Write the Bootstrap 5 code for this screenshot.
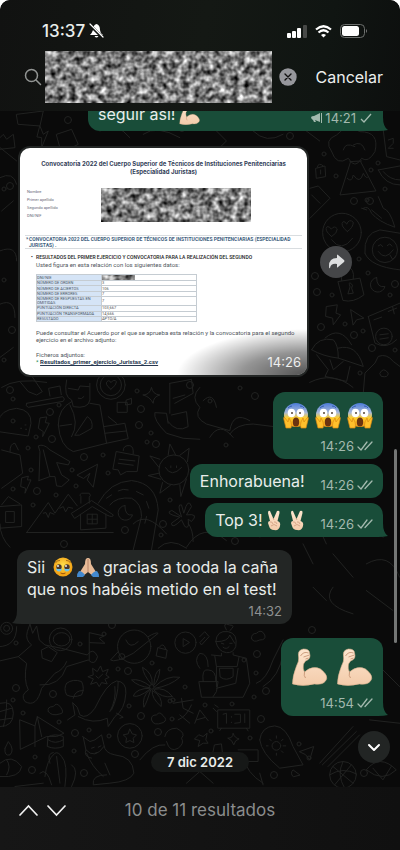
<!DOCTYPE html>
<html lang="es">
<head>
<meta charset="utf-8">
<meta name="viewport" content="width=device-width, initial-scale=1">
<title>Chat</title>
<link href="https://cdn.jsdelivr.net/npm/bootstrap@5.3.0/dist/css/bootstrap.min.css" rel="stylesheet">
<style>
html{background:#fff}
body{background:#0a0a0a;color:#e9edeb;font-family:Inter,"Liberation Sans",sans-serif;font-size:16px;line-height:22px;border-radius:10px 10px 0 0;overflow:hidden}
svg{display:block;flex:none}
.topbar{background:linear-gradient(100deg,#111211,#141814 50%,#101512 80%,#0d0f0e);border-radius:10px 10px 0 0;padding-bottom:5px}
.status{padding:14px 32px 0 42px;height:48px}
.clock{font-size:17px;font-weight:500}
.searchrow{height:58px;padding:0 17px 0 24px;gap:3px}
.search-in{width:100%;height:38px;background:transparent;border:0;color:#ddd;outline:0}
.field{height:52px}
.censor{position:absolute;inset:0;width:100%;height:100%}
.plain{border:0;background:transparent;color:inherit;padding:0}
.cancel{margin-left:16px;color:#eceeed}
.chat{overflow:hidden;min-height:0;padding:0 17px;z-index:0}
.chat>*{flex-shrink:0}
.wall{position:absolute;inset:0;width:100%;height:100%;z-index:-1;fill:none;stroke:#212221;stroke-width:3;stroke-linejoin:round;stroke-linecap:round}
.bub{position:relative;border-radius:12px;padding:6px 10px;background:#232625}
.out{background:#194d39;align-self:flex-end}
.in{align-self:flex-start}
.tail::after{content:"";position:absolute;right:-5px;bottom:0;width:18px;height:14px;background:inherit;clip-path:path("M0 14 H8 Q14 14 18 13 Q13 10 13 0 H0Z")}
.in.tail::after{right:auto;left:-5px;transform:scaleX(-1)}
.first{width:295px}
.meta{font-size:13px;line-height:14px;color:#a3b9ae;display:flex;align-items:center;gap:3px}
.in .meta{color:#8f9191}
.g5{margin-top:5px}.g13{margin-top:13px}.g14{margin-top:14px}.g15{margin-top:15px}
.gap6{gap:6px}
.tall{height:67px}.taller{height:78px}
.wide{width:275px}
.shot{padding:2px;width:291px;margin-left:1px}
.doc{position:relative;background:#fff;border-radius:10px;overflow:hidden;height:227px;padding:12px 5px 0 5px;color:#50565d;font-family:Roboto,sans-serif;font-size:6px;line-height:7px}
.doc h1{font-family:Inter,sans-serif;font-size:6px;line-height:8px;font-weight:700;color:#34425a;margin:0;text-align:center}
.who{font-size:4px;line-height:8px;padding:12px 0 0 2px;height:59px;color:#667}
.who svg{margin-left:43px;width:150px;height:34px}
.sect{border-top:1px solid #d9dde0;border-bottom:1px solid #d9dde0;color:#3f5f80;font-size:5px;line-height:6px;font-weight:700;padding:0 0 0 4px;height:14px;position:relative}
.sect::before{content:"*";position:absolute;left:1px}
.inner{padding:4px 5px 0 11px}
.strongline{font-size:5px;line-height:8px;font-weight:500;color:#1b1b1b;position:relative}
.strongline::before{content:"•";position:absolute;left:-5px}
.data{width:161px;height:48px;margin:6px 0 7px;font-size:4px;line-height:4px;border-collapse:collapse;color:#555}
.data th,.data td{border:1px solid #c5ccd2;padding:0;font-weight:400}
.data th{background:#d5e4f6;width:65px;color:#4a5563}
.doc a{color:#26374f;font-weight:700}
.shade{position:absolute;inset:0;background:radial-gradient(ellipse 130px 46px at 100% 100%,rgba(0,0,0,.68),rgba(0,0,0,.42) 50%,transparent)}
.stamp{position:absolute;right:6px;bottom:5px;color:#eee;font-size:13px;line-height:16px;font-family:Inter,sans-serif}
.round{width:32px;height:32px;border-radius:50%;border:0;padding:0;display:flex;align-items:center;justify-content:center}
.share{background:#454648;margin-left:11px}
.fab{position:absolute;right:10px;bottom:24px;background:#222524}
.thumb{position:absolute;right:3px;top:338px;width:3px;height:194px;border-radius:2px;background:#747675}
.pill{background:#161817;border-radius:10px;font-size:13px;line-height:20px;font-weight:600;padding:0 16px;margin:36px 0 15px}
.bottombar{background:linear-gradient(90deg,#161616,#101010);height:63px;padding:12px 19px 0;gap:9px;color:#8b8d8d}
.bottombar button{height:22px;display:flex;align-items:center}
.count{font-size:17px;padding-right:56px}
</style>
<script src="https://cdn.jsdelivr.net/npm/bootstrap@5.3.0/dist/js/bootstrap.bundle.min.js"></script>
</head>
<body class="d-flex flex-column vh-100">
<svg width="0" height="0" class="position-absolute" aria-hidden="true">
<defs>
<filter id="grain" x="0" y="0" width="100%" height="100%" color-interpolation-filters="sRGB"><feTurbulence type="fractalNoise" baseFrequency=".16" numOctaves="2" seed="8"/><feColorMatrix values="1.4 0 0 0 -.2 1.4 0 0 0 -.2 1.4 0 0 0 -.2 0 0 0 0 1"/></filter>
<linearGradient id="gs" x2="0" y2="1"><stop stop-color="#4b7bd8"/><stop offset=".4" stop-color="#a9b9d8"/><stop offset=".62" stop-color="#ffd02e"/><stop offset="1" stop-color="#f59a16"/></linearGradient>
<radialGradient id="gy" cy=".4"><stop stop-color="#ffe14d"/><stop offset="1" stop-color="#f4a416"/></radialGradient>
<linearGradient id="sk" x2="0" y2="1"><stop stop-color="#fde6cf"/><stop offset="1" stop-color="#f3cbaa"/></linearGradient>
<symbol id="scream" viewBox="0 0 26 27"><circle cx="13" cy="13" r="12" fill="url(#gs)"/><path d="M5 6q2-2 4-2M17 4q3 0 4 2" stroke="#3560b5" fill="none"/><ellipse cx="8.500" cy="11" rx="3.800" ry="4.300" fill="#fff"/><ellipse cx="17.500" cy="11" rx="3.800" ry="4.300" fill="#fff"/><circle cx="9" cy="11" r="1" fill="#543"/><circle cx="17" cy="11" r="1" fill="#543"/><ellipse cx="13" cy="20" rx="3.200" ry="4.500" fill="#6b3310"/><path d="M2 16Q0 14 1 18L3 26H8Q9 23 8 20L6 16L5 20ZM24 16Q26 14 25 18L23 26H18Q17 23 18 20L20 16L21 20Z" fill="#ffc02c" stroke="#dc8b12" stroke-width=".7"/></symbol>
<symbol id="arm" viewBox="0 0 36 38"><path d="M1 36Q1 28 5 18Q8 13 7 8Q6 2 12 1Q18 1 18 5Q20 11 14 13L12 16Q11 21 13 24Q21 17 29 21Q38 28 34 33Q31 37 23 36Q11 39 1 36Z" fill="url(#sk)" stroke="#dcb18f" stroke-width=".6"/><path d="M9 8Q12 3 17 5M12 9L18 7M14 11l3-1M13 24Q12 28 14 30" fill="none" stroke="#c08d6c" stroke-width=".8"/></symbol>
<symbol id="peace" viewBox="0 0 15 21"><path d="M3 11L1 3Q1 0 3 1L6.500 9L10 1Q13 0 12.500 3L10.500 11Q14 12 13 16Q12 21 7 20Q3 20 2 16L1 13Q1 11 3 11Z" fill="url(#sk)"/><path d="M7 10L6 8M3 12q2-1 3 2M7 12q2-1 3 2M4 16q3-3 6 0" fill="none" stroke="#c99474" stroke-width=".7"/></symbol>
<symbol id="tears" viewBox="0 0 20 20"><circle cx="10" cy="10" r="9.500" fill="url(#gy)"/><path d="M2.500 6Q4 3 7 3.500M13 3.500Q16 3 17.500 6" fill="none" stroke="#9b6014" stroke-width=".8"/><circle cx="6" cy="10" r="2.700" fill="#4b382c"/><circle cx="14" cy="10" r="2.700" fill="#4b382c"/><path d="M3 11.500Q6 12.500 9 11.500Q8.500 14.500 6 14.500Q3.500 14.500 3 11.500M11 11.500Q14 12.500 17 11.500Q16.500 14.500 14 14.500Q11.500 14.500 11 11.500" fill="#68c4ed"/><circle cx="5" cy="9" r=".9" fill="#fff"/><circle cx="13" cy="9" r=".9" fill="#fff"/><path d="M7.500 16Q10 17.500 12.500 16" fill="none" stroke="#98540f"/></symbol>
<symbol id="pray" viewBox="0 0 22 21"><path d="M10.500 1Q8 1 8 7L3 15L6 19L11 15L16 19L19 15L14 7Q14 1 11.500 1Z" fill="#e8bb97"/><path d="M11 2V15" stroke="#a8755a" stroke-width=".8"/><path d="M2 14Q5 14 8 18L6 20H0Q0 16 2 14M20 14Q17 14 14 18L16 20H22Q22 16 20 14" fill="#4389cf"/></symbol>
<symbol id="tick" viewBox="0 0 16 10"><path d="M1 6L4 9L10 1M8 8.500L15 1" fill="none" stroke="currentColor" stroke-width="1.300" stroke-linecap="round"/></symbol>
</defs>
</svg>

<header class="topbar flex-shrink-0">
 <div class="status d-flex align-items-center justify-content-between">
  <div class="d-flex align-items-center gap-1"><span class="clock">13:37</span>
   <svg width="15" height="16" viewBox="0 0 15 16"><path d="M7.500 1Q4 2 4 7Q3 10 1 12H14Q11 10 11 7Q11 2 7.500 1M5.500 13Q7.500 16 9.500 13Z" fill="#fff"/><path d="M0 1L14 15" stroke="#121412" stroke-width="3"/><path d="M1 1L14 14" stroke="#fff" stroke-width="1.200" stroke-linecap="round"/></svg></div>
  <div class="d-flex align-items-center gap-2">
   <svg width="20" height="13" viewBox="0 0 20 13" fill="#fff"><rect y="8" width="4" height="5" rx="1"/><rect x="5" y="6" width="4" height="7" rx="1"/><rect x="10" y="3" width="4" height="10" rx="1"/><rect x="16" width="4" height="13" rx="1" fill="#474947"/></svg>
   <svg width="17" height="13" viewBox="0 0 17 13" fill="none" stroke="#fff" stroke-width="2.200"><path d="M1 4.500Q8.500-2 16 4.500M3.500 7.500Q8.500 3 13.500 7.500"/><path d="M6 10Q8.500 8 11 10L8.500 12.500Z" fill="#fff" stroke="none"/></svg>
   <svg width="28" height="14" viewBox="0 0 28 14"><rect x=".5" y=".5" width="24" height="13" rx="4" fill="none" stroke="#6d706e"/><rect x="2" y="2" width="17" height="10" rx="2.500" fill="#fff"/><path d="M26 5Q28 7 26 9Z" fill="#777"/></svg>
  </div>
 </div>
 <div class="searchrow d-flex align-items-center">
  <svg width="18" height="18" viewBox="0 0 18 18" fill="none" stroke="#929593" stroke-width="1.500" stroke-linecap="round"><circle cx="7.500" cy="7.500" r="6"/><path d="M12 12L16.500 16.500"/></svg>
  <div class="field position-relative flex-fill d-flex align-items-center">
   <input class="search-in" type="text" aria-label="Buscar">
   <svg class="censor" aria-hidden="true"><rect width="100%" height="100%" filter="url(#grain)"/></svg>
  </div>
  <button class="plain ms-1" aria-label="Borrar"><svg width="18" height="18" viewBox="0 0 18 18"><circle cx="9" cy="9" r="8.700" fill="#96979c"/><path d="M6 6L12 12M12 6L6 12" stroke="#111" stroke-width="1.400" stroke-linecap="round"/></svg></button>
  <button class="plain cancel">Cancelar</button>
 </div>
</header>

<main class="chat flex-fill position-relative d-flex flex-column justify-content-end">
 <svg class="wall" viewBox="0 111 400 676" preserveAspectRatio="xMidYMid slice" aria-hidden="true">
  <defs>
   <marker id="o3" markerUnits="userSpaceOnUse" markerWidth="10" markerHeight="10" refX="5" refY="5"><circle cx="5" cy="5" r="3.500" stroke-width="1"/></marker>
   <marker id="o2" markerUnits="userSpaceOnUse" markerWidth="8" markerHeight="8" refX="4" refY="4"><circle cx="4" cy="4" r="2" stroke-width="1"/></marker>
  </defs>
  <path stroke="none" marker-start="url(#o3)" marker-mid="url(#o3)" marker-end="url(#o3)" d="M68 120L120 124 182 128 290 136 354 201 315 276 317 292 321 327 370 201 395 284 354 335 372 348 10 390 50 412 52 439 141 409 139 425 156 444 84 457 37 491 125 530 163 524 64 544 312 630 112 625 16 688 53 694 128 671 257 654 266 691 141 716 158 732 75 733 135 754 32 770 84 773 261 719 274 775 364 773 12 330 10 186 190 385 255 396 235 541"/>
  <path stroke="none" marker-start="url(#o2)" marker-mid="url(#o2)" marker-end="url(#o2)" d="M324 154L336 176 371 170 378 163 385 189 367 200 359 259 368 273 390 295 332 295 345 324 363 331 395 350 360 373 36 437 59 405 13 399 13 421 28 448 31 470 13 489 72 470 103 455 108 473 76 486 33 505 56 495 151 433 147 442 137 391 170 500 161 535 16 643 80 644 104 634 118 669 152 663 170 669 185 687 170 701 129 706 172 719 173 700 13 700 23 713 59 722 89 730 109 736 35 757 74 751 244 660 256 673 205 705 232 704 254 697 211 731 250 738 299 744 309 758 4 189 4 280 4 360 240 388 226 445 210 401"/>
  <g transform="translate(0 380) scale(.333)">
   <path d="M80 70L188 50Q198 57 190 64L85 82Q74 78 80 70M150 48L146 25L180 18L184 44M60 5L85 35L110 45L127 35L90-20M-5 125Q0 90 50 85Q95 90 93 130L85 168L-5 155M62 145h3M75 135h3M77 148h3"/>
   <path d="M120 115L115 145L130 155L128 170L148 130L136 128L140 112ZM65 295L62 320L77 325L75 340L93 300L82 300L85 290Z"/>
   <path d="M200 0Q190 50 215 60L220 80Q265 88 270 60L270 10M205 25L235 30L240 18L268 20M235 55Q245 60 252 50M175 135Q175 85 215 65M175 135Q180 200 220 215L320 190L300 75L270 70M210 75Q240 130 215 170M180 138L215 133M320 190L385 176L375 130L312 140M350 130L325 110M315 160L380 153M225 165L262 110Q280 120 276 145L240 165Z"/>
   <circle cx="333" cy="15" r="43"/><circle cx="333" cy="15" r="32"/><path d="M333 28Q310 10 325 2Q333 3 333 8Q342-4 350 5Q350 15 333 28M430 45Q450 45 455 22Q458 43 480 45Q460 50 460 70Q450 50 430 45M353 67H382V97H353ZM380 60L395 55V72L378 75ZM510 10L575-2L580 40L525 70M510 10V100M520 55L555 45M505 130L500 100L465 98Q460 120 500 160L550 175L600 178M515 105L560 95L565 140Q530 160 505 125"/>
   <path d="M117 302L120 215L115 198Q130 190 150 210L210 245L205 255L170 248L185 285L208 300L185 320L170 318L165 290L150 290L117 302M130 210L150 290M232 285L293 253L280 322L262 300L270 280L252 295Z"/>
   <path d="M350 215L418 228L412 275L380 275L362 285L355 270L340 268ZM370 212Q370 195 390 197Q402 200 400 222M358 238L405 243M355 250L400 256M5 210L60 225L68 280L5 325M30 215Q30 190 45 190L55 210"/>
   <circle cx="522" cy="270" r="45"/><path d="M497 263Q515 295 545 263M513 258V263M530 258V263M505 225L510 192L527 224M540 226L568 205L563 245M480 238L450 228L477 262M477 280L445 287L483 298M488 308L480 340L512 316M540 315L543 350L560 297"/>
   <path d="M80 458L145 368L165 400L205 343L232 378M130 400L138 398L145 413L150 398L162 403M180 385L190 380L197 396L205 382L218 385M215 400L275 362L340 405Q340 415 320 405L277 380L225 415ZM242 403V450L318 445V402M263 403H292V432H263ZM277 403V432M263 418H292M243 370V350Q235 345 245 340H268Q275 347 268 352V370M80 458H340M295 370Q330 305 395 302Q470 310 475 390L455 510M330 375Q350 350 395 355Q425 370 425 410L400 510M320 355L335 345M355 333Q370 325 385 330M410 335L430 345M440 365L447 385M440 410L435 430M375 377A22 22 0 1 0 398 405Q375 410 375 377"/>
   <path d="M545 410Q530 370 545 375L552 400Q565 350 575 380L560 405Q600 400 575 425L565 418Q570 450 555 440L545 420Q515 450 515 430L540 412Q490 400 515 392ZM565 430Q580 450 580 485M475 505Q510 470 560 505M0 380L65 375V440L0 445M18 395H43V428H18ZM5 375L25 350L60 372"/>
  </g>
  <g transform="translate(0 620) scale(.333)">
   <circle cx="20" cy="25" r="18"/><circle cx="20" cy="25" r="9"/><path d="M-5 80Q50 80 50 20M-10 125L55 110L80 130Q70 180 85 210Q60 225 75 245Q110 265 125 205L165 160Q190 150 200 125M120 195Q180 200 200 140L265 120Q285 140 293 110Q280 80 262 105L185 85L135 75L118 60L110 18L98 40L90 12L82 35Q75 60 95 75L55 110M125 90L145 80L172 98L155 125L128 115Z"/><circle cx="182" cy="58" r="34"/><ellipse cx="185" cy="58" rx="25" ry="20"/><path d="M268 120L268 38L312 48L298 55L315 70L270 68"/>
   <circle cx="403" cy="80" r="50"/><path d="M378 60Q390 90 415 65M355 95L332 120Q345 130 400 100L475 40Q470 35 445 50"/><circle cx="366" cy="110" r="9"/>
   <circle cx="557" cy="68" r="32"/><path d="M550 57V80L568 68ZM475 83L502 90L498 115L470 108ZM480 80Q490 65 498 88M600 50L615 35L628 50L605 75L600 68L615 52M755 55Q755 40 770 40Q785 25 795 45Q800 60 780 60Q760 70 755 55"/>
   <path d="M265 170L280 165L278 145L292 155L302 138L308 155L325 148L318 165L328 172L315 178L322 192L305 188L298 200L290 187L272 193L280 178ZM288 168L295 175L308 163M200 190Q220 175 245 185Q255 205 245 225Q220 235 200 225Q190 205 200 190M220 235Q225 210 250 212"/>
   <path d="M203 300L225 285L218 248L232 262L240 285Q260 300 285 265Q320 190 350 183Q380 185 378 220Q375 270 345 290L325 320L322 295Q280 315 235 290M355 185Q355 230 335 270M345 200Q350 240 330 275M350 280L370 292L360 295"/>
   <path d="M455 193Q430 165 428 142Q460 160 457 193M462 193Q465 155 480 148Q478 180 462 196M465 200Q500 165 540 172Q510 198 466 205M463 208Q495 200 518 230Q485 235 462 210M458 212Q490 230 484 260Q455 235 457 213M452 211Q440 250 432 262Q425 230 450 209M450 205Q410 205 400 228Q415 235 450 208M450 198Q420 175 395 180Q415 200 448 203"/><circle cx="456" cy="201" r="7"/>
   <path d="M648 65Q650 30 685 35Q715 40 708 80Q700 100 680 98Q655 95 648 65M650 65Q685 65 690 45L705 70M680 30Q665 5 690 15Q710 15 690 32M665 70L672 72M690 70L697 70M670 82Q680 90 688 80M665 100V108L635 105M700 98V105L740 115L750 190L730 232H605L597 185H655L650 215L640 230M645 108L650 140H712L718 110M650 140L650 200M715 145L708 190L650 205M660 145H700V170Q680 185 662 172ZM600 145Q580 120 600 100Q625 100 625 140M610 185Q605 145 625 150Q650 150 648 185"/>
   <path d="M520 250L580 240M545 235L550 265L580 280M575 255Q560 290 535 300M540 285L570 310M585 310L600 270L625 302M590 300L615 293M655 270H750V325H655ZM665 325L660 332M740 325L745 333M640 265L650 275M645 255L655 262M670 283L680 280V310M695 290V292M695 307V308M705 283H722V308L705 310M735 282V308"/>
   <path d="M60 300L105 318L112 290L192 340L170 350L140 350L62 388ZM105 318V380M112 290L125 350M145 350Q165 340 190 350V380Q165 390 143 380ZM145 360Q165 375 190 360"/>
   <circle cx="390" cy="348" r="37"/><path d="M390 328L397 342L410 345L400 355L402 368L390 362L378 368L380 354L370 345L384 342ZM145 275Q140 260 160 260Q170 245 182 262Q195 280 180 282Q155 290 145 275M455 300Q452 285 470 285Q480 272 490 288Q505 300 490 308Q460 320 455 300"/>
   <path d="M248 350L270 365L285 360L305 345L312 375Q315 400 345 405Q400 410 402 460Q390 485 330 490L280 495Q275 465 320 465M250 352L258 390Q250 410 275 415M258 390Q285 420 312 380M275 385L283 382M295 382L303 378M285 400L293 398M260 400Q275 440 310 470M315 430L330 465M135 470Q140 420 165 400Q175 395 185 410Q205 430 195 500M155 495Q140 440 120 460M215 500Q240 450 215 435M170 410L180 490M150 430Q140 400 160 398M0 250Q40 240 40 280Q40 320 0 320M0 275L35 265M0 300L35 295M20 240Q20 290 10 320M15 385Q20 375 25 365Q45 390 30 405Q12 410 15 385M0 430Q35 400 65 440Q60 475 0 470M20 420Q35 440 20 465M45 500L130 490"/>
   <path d="M495 350Q500 325 530 325Q560 340 545 355Q555 370 535 385Q510 400 500 365M420 420Q460 370 495 375M685 355Q700 355 700 340Q705 355 718 357Q705 360 702 375Q698 360 685 355M598 345L610 350L622 340L618 360L625 370L610 370L595 380L600 362L585 358ZM645 375L665 372L668 400H640ZM715 390H775V425H720M780 360Q785 320 825 318Q860 320 880 380L910 435L840 445Q785 400 780 360"/>
   <circle cx="830" cy="378" r="13"/><path d="M830 355V348M850 378H858M830 400V406M805 378H800M845 363L850 358M845 393L850 398M815 363L810 358M960 430L1060 320M968 435L1070 335M985 440L1080 345M770 190Q800 180 820 120L850 60M790 200Q840 170 850 100M900 395L942 380L930 420L918 405Z"/>
   <circle cx="1030" cy="465" r="40"/><path d="M1000 440L1060 490M1055 435L1005 495M1030 425Q1010 465 1035 505M990 465Q1030 440 1070 462M1100 450Q1140 400 1190 450Q1150 490 1100 450M1120 445L1150 480L1175 440M1100 190Q1100 130 1150 150L1200 200M1110 300L1200 310M880 470Q870 460 880 450L900 465ZM560 490L600 455L640 490M730 410Q740 460 790 490M780 460L790 495"/>
  </g>
  <g transform="translate(300 130) scale(.333)">
   <path d="M95 65Q70 30 110 15Q140-20 180 5Q240 5 225 65Q205 100 185 85Q165 120 145 85Q110 110 95 65M130 60Q135 35 165 50M160 45Q185 30 195 60M152 95L120 195L228 183L182 95M142 145Q155 160 160 135Q180 165 190 130Q200 150 205 140M150 95L185 93M48 115L75 108L77 140L50 145ZM52 112Q55 95 70 108M62 120V132M250 0L260 80L300 90M265 30L280 25V40L265 55L280 55M235 120L300 108M235 120Q255 165 300 165M250 125Q270 150 300 150M30 175L55 168L90 205L30 265M35 195L60 220M190 235Q205 225 215 250Q235 275 285 292Q270 240 250 235L235 200M215 240L245 265M185 235L200 240"/>
   <circle cx="126" cy="308" r="58"/><path d="M95 320Q70 300 82 290Q90 290 94 298Q103 285 112 297Q112 310 95 320M142 305Q118 285 130 275Q138 275 140 283Q148 265 160 277Q160 293 142 305M95 330Q125 370 158 325"/><path d="M195 370Q190 310 240 300L300 310M195 370Q210 410 300 420"/><circle cx="255" cy="360" r="38"/><path d="M235 348L243 344L248 350M262 347L270 342L276 349M235 365Q255 395 280 360M270 375L278 388L288 380"/>
   <path d="M115 455L180 445L192 495Q160 520 130 512ZM125 452Q120 410 140 410Q165 415 160 447M150 470Q145 455 152 460Q162 465 155 475L160 490L145 492ZM230 443A22 22 0 1 0 255 470Q230 475 230 443M80 530L112 525L108 550L122 555L100 585L98 565L78 560ZM153 540L192 565L170 570L160 585ZM205 560L300 520M205 560L225 640Q260 660 290 630M222 570L245 562M265 545L290 535M278 530L283 552"/><circle cx="252" cy="620" r="25"/><path d="M240 615L265 612M240 628L265 624M35 660Q55 620 100 630Q115 645 115 685Q70 680 35 660M75 625Q120 585 155 645M115 655Q170 640 190 710L115 685M50 675L85 720L75 740L140 755L150 710M90 690L100 720L130 695M190 790L195 730L225 700L235 680Q260 670 280 695L300 710M240 730Q250 710 265 730Q265 745 245 740Z"/>
  </g>
  <g transform="translate(0 111) scale(.333)">
   <path d="M50 10L130 0L120 45L55 40ZM0 80L10 70L20 85L40 70L45 110L0 115M120 45L130 70L145 60L125 110L125 80L112 78ZM170 70L215 55L235 100L185 125ZM300 60Q350 30 390 80M430 70Q470 40 540 80M650 60L680 90L660 110M760 60Q800 100 850 70M920 60L960 90M0 110L50 150M0 200Q40 180 50 220M5 300L40 270M0 420Q50 400 50 450M0 580Q45 560 45 620M0 740L40 710M5 830Q50 800 140 815M930 815Q1000 780 1060 830"/>
   <path d="M600 830Q570 860 600 890Q580 920 620 940L690 960Q700 900 750 930M610 870Q640 840 650 890M690 970Q710 940 760 940L840 950M630 980Q660 930 700 980"/>
   <path d="M30 1310Q0 1280 0 1240M400 1240Q440 1200 500 1270M560 1310Q610 1230 680 1290M700 1260L750 1235L780 1280M880 1250L950 1235L980 1300M1050 1270Q1090 1210 1150 1280M910 1300L940 1360M1000 1330L1060 1400M1100 1360Q1170 1320 1200 1400M1000 1430Q960 1480 1060 1510M1100 1440L1180 1500M940 1430L980 1470"/>
  </g>
 </svg>

 <div class="bub out tail first d-flex justify-content-between align-items-end"><span class="d-flex align-items-center gap-1">seguir así!<svg width="21" height="22"><use href="#arm"/></svg></span>
  <span class="meta"><svg width="11" height="10" viewBox="0 0 11 10" fill="currentColor"><path d="M9 0V9L4 7L5 9L3 9L2 7Q0 6 0 4Q1 3 3 3ZM10 0H11V10H10Z"/></svg><span>14:21</span><svg width="14" height="10" viewBox="0 0 14 10"><path d="M2 6L5 9L12 1" fill="none" stroke="currentColor" stroke-width="1.300"/></svg></span></div>

 <div class="d-flex align-items-center g15">
  <div class="bub in shot">
   <div class="doc">
    <h1>Convocatoria 2022 del Cuerpo Superior de Técnicos de Instituciones Penitenciarias<br>(Especialidad Juristas)</h1>
    <div class="who d-flex"><div>Nombre<br>Primer apellido<br>Segundo apellido<br>DNI/NIF</div><svg aria-hidden="true"><rect width="100%" height="100%" filter="url(#grain)"/></svg></div>
    <div class="sect">CONVOCATORIA 2022 DEL CUERPO SUPERIOR DE TÉCNICOS DE INSTITUCIONES PENITENCIARIAS (ESPECIALIDAD<br>JURISTAS) .</div>
    <div class="inner">
     <div class="strongline">RESULTADOS DEL PRIMER EJERCICIO Y CONVOCATORIA PARA LA REALIZACIÓN DEL SEGUNDO</div>
     <div>Usted figura en esta relación con los siguientes datos:</div>
     <table class="data">
      <tr><th>DNI/NIE</th><td><svg width="33" height="5"><rect width="33" height="5" filter="url(#grain)"/></svg></td></tr>
      <tr><th>NÚMERO DE ORDEN</th><td>3</td></tr>
      <tr><th>NÚMERO DE ACIERTOS</th><td>106</td></tr>
      <tr><th>NÚMERO DE ERRORES</th><td>7</td></tr>
      <tr><th>NÚMERO DE RESPUESTAS EN<br>OMITIDAS</th><td>7</td></tr>
      <tr><th>PUNTUACIÓN DIRECTA</th><td>103,667</td></tr>
      <tr><th>PUNTUACIÓN TRANSFORMADA</th><td>14,666</td></tr>
      <tr><th>RESULTADO</th><td>APTO/A</td></tr>
     </table>
     <div>Puede consultar el Acuerdo por el que se aprueba esta relación y la convocatoria para el segundo<br>ejercicio en el archivo adjunto:</div>
     <div class="pt-2">Ficheros adjuntos:</div>
     <div><span class="text-success">*</span> <a href="#">Resultados_primer_ejercicio_Juristas_2.csv</a></div>
    </div>
    <div class="shade"></div><span class="stamp">14:26</span>
   </div>
  </div>
  <button class="round share" aria-label="Reenviar"><svg width="17" height="15" viewBox="0 0 17 15"><path d="M9 1Q9 0 10 1L16 6Q17 7 16 8L10 13Q9 14 9 13V10Q3 9 2 14Q1 15 1 12Q1 4 9 4Z" fill="#dedfe0"/></svg></button>
 </div>

 <div class="bub out tall g15 d-flex flex-column align-items-end justify-content-between">
  <span class="gap6 d-flex pt-1" role="img" aria-label="😱😱😱"><svg width="26" height="27"><use href="#scream"/></svg><svg width="26" height="27"><use href="#scream"/></svg><svg width="26" height="27"><use href="#scream"/></svg></span>
  <span class="meta"><span>14:26</span><svg width="16" height="10"><use href="#tick"/></svg></span>
 </div>
 <div class="bub out g5 d-flex align-items-end gap-3"><span>Enhorabuena!</span><span class="meta"><span>14:26</span><svg width="16" height="10"><use href="#tick"/></svg></span></div>
 <div class="bub out tail g5 d-flex align-items-end gap-3"><span class="d-flex align-items-center">Top 3!<span class="d-flex gap-2 ms-1"><svg width="15" height="21"><use href="#peace"/></svg><svg width="15" height="21"><use href="#peace"/></svg></span></span><span class="meta"><span>14:26</span><svg width="16" height="10"><use href="#tick"/></svg></span></div>

 <div class="bub in tail wide g13 text-nowrap">
  <div class="d-flex align-items-center">Sii<svg class="ms-2" width="20" height="20"><use href="#tears"/></svg><svg class="ms-1 me-1" width="22" height="21"><use href="#pray"/></svg>gracias a tooda la caña</div>
  <div>que nos habéis metido en el test!</div>
  <div class="meta justify-content-end pt-1"><span>14:32</span></div>
 </div>

 <div class="bub out tail taller g14 d-flex flex-column align-items-end justify-content-between">
  <span class="d-flex pt-1 gap-2" role="img" aria-label="💪💪"><svg width="37" height="38"><use href="#arm"/></svg><svg width="37" height="38"><use href="#arm"/></svg></span>
  <span class="meta"><span>14:54</span><svg width="16" height="10"><use href="#tick"/></svg></span>
 </div>
 <div class="pill align-self-center">7 dic 2022</div>
 <div class="thumb"></div>
 <button class="round fab" aria-label="Bajar"><svg width="14" height="9" viewBox="0 0 14 9"><path d="M2 2L7 7L12 2" fill="none" stroke="#fff" stroke-width="2" stroke-linecap="round" stroke-linejoin="round"/></svg></button>
</main>

<footer class="bottombar d-flex align-items-start flex-shrink-0">
 <button class="plain" aria-label="Anterior"><svg width="19" height="14" viewBox="0 0 19 14"><path d="M1 12L9.500 3L18 12" fill="none" stroke="#f0f0f0" stroke-width="1.700" stroke-linecap="round"/></svg></button>
 <button class="plain" aria-label="Siguiente"><svg width="19" height="14" viewBox="0 0 19 14"><path d="M1 3L9.500 12L18 3" fill="none" stroke="#f0f0f0" stroke-width="1.700" stroke-linecap="round"/></svg></button>
 <span class="count flex-fill text-center">10 de 11 resultados</span>
</footer>
</body>
</html>
